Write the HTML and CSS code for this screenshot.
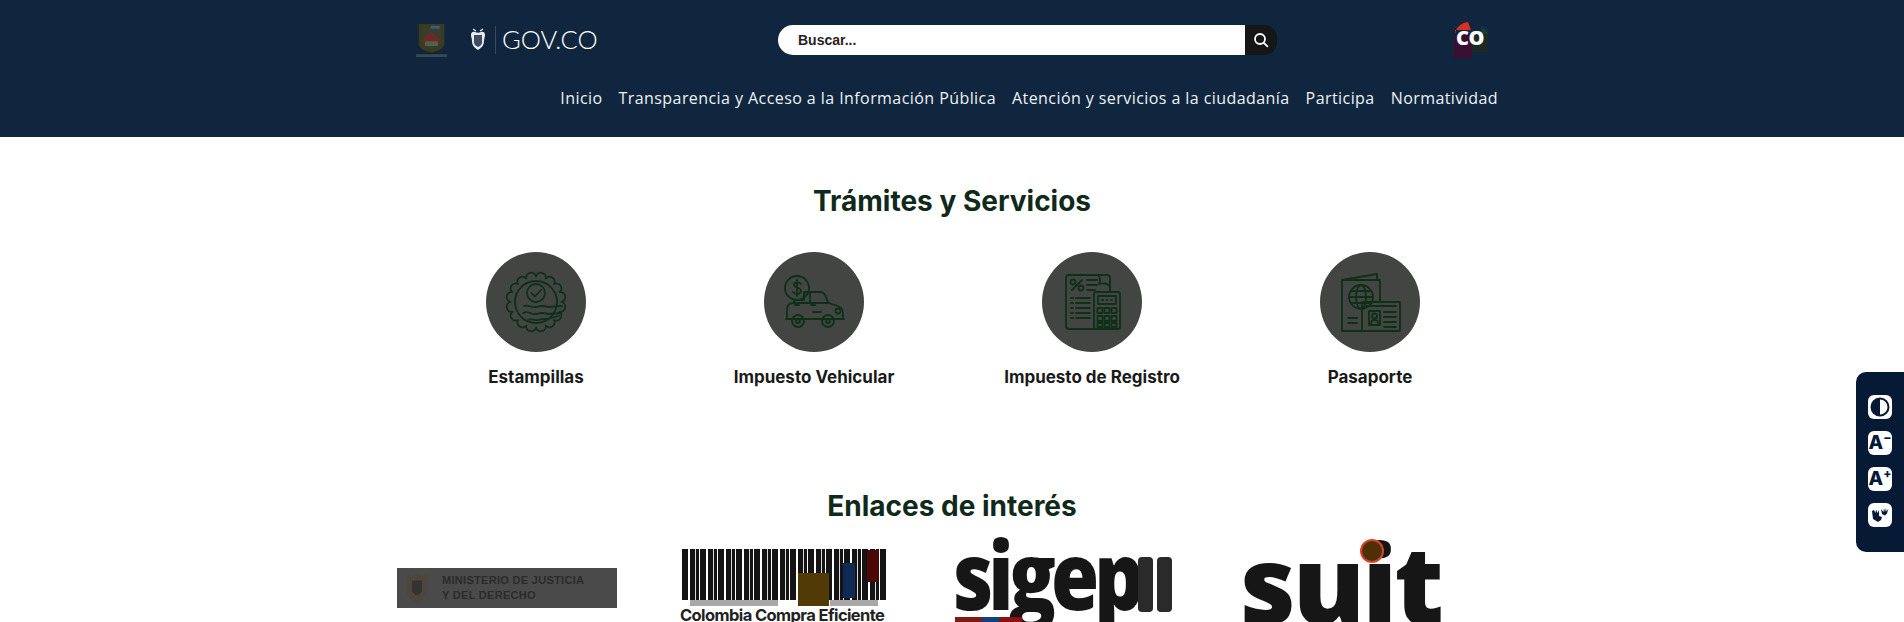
FILE: index.html
```html
<!DOCTYPE html>
<html lang="es">
<head>
<meta charset="utf-8">
<title>Trámites y Servicios</title>
<link rel="stylesheet" href="styles.css">
</head>
<body>
<header class="site-header">
  <div class="container">
    <div class="top-row">
      <div class="brand">
        <svg class="crest" viewBox="0 0 36 38" aria-hidden="true">
          <path d="M4 1h28v21c0 6-6 8-14 10C10 30 4 28 4 22z" fill="#3c3a1c"/>
          <path d="M8 5h20v16c0 4-5 5-10 7-5-2-10-3-10-7z" fill="#33402f"/>
          <path d="M9 17l8-8 6 5 5 5v3H9z" fill="#6b2a2a"/>
          <path d="M17 3h10v3H17z" fill="#3e5a8a"/>
          <path d="M11 20h14v5H11z" fill="#51624a"/>
          <path d="M1 34h34v3H1z" fill="#3a4a4c"/>
        </svg>
        <div class="gov">
          <svg class="gov-emblem" viewBox="0 0 18 26" aria-hidden="true">
            <path d="M2 8c0-3 2-4 4-3 2 1 4 1 6 0 2-1 4 0 4 3 0 2-1 4-1 6 0 5-3 7-6 9-3-2-6-4-6-9 0-2-1-4-1-6z" fill="#e8ecef"/>
            <path d="M5 8h8v7c0 3-2 4-4 5-2-1-4-2-4-5z" fill="#3d4c5e"/>
            <path d="M4 2l3 2M14 2l-3 2" stroke="#e8ecef" stroke-width="1.4"/>
          </svg>
          <span class="gov-sep"></span>
          <span class="gov-text">GOV.CO</span>
        </div>
      </div>
      <form class="search">
        <span class="search-field">Buscar...</span>
        <span class="search-btn">
          <svg viewBox="0 0 16 16" width="16" height="16" aria-hidden="true"><circle cx="7" cy="7" r="5" fill="none" stroke="#fff" stroke-width="1.8"/><path d="M10.800 10.800l3.600 3.600" stroke="#fff" stroke-width="1.800" stroke-linecap="round"/></svg>
        </span>
      </form>
      <div class="co-badge">
        <svg viewBox="0 0 37 36" aria-hidden="true">
          <path d="M2 12C3 5 8 1 15 0l3 8H2z" fill="#d8321e"/>
          <path d="M1 12h18v24H1z" fill="#3a1030"/>
          <path d="M19 8h16v22H19z" fill="#1b2a24"/>
          <path d="M28 4a8 8 0 0 1 7 8h-7z" fill="#123a44"/>
        </svg>
        <span class="co-text">CO</span>
      </div>
    </div>
    <nav class="main-nav">
      <a>Inicio</a>
      <a>Transparencia y Acceso a la Información Pública</a>
      <a>Atención y servicios a la ciudadanía</a>
      <a>Participa</a>
      <a>Normatividad</a>
    </nav>
  </div>
</header>

<main class="container">
  <section class="services">
    <h2 class="section-title">Trámites y Servicios</h2>
    <div class="service-grid">
      <article class="service">
        <span class="service-icon">
          <svg viewBox="0 0 100 100" aria-hidden="true">
            <path d="M75.500 50A5 5 0 0 1 73.600 59.800A5 5 0 0 1 68 68A5 5 0 0 1 59.800 73.600A5 5 0 0 1 50 75.500A5 5 0 0 1 40.200 73.600A5 5 0 0 1 32 68A5 5 0 0 1 26.400 59.800A5 5 0 0 1 24.500 50A5 5 0 0 1 26.400 40.200A5 5 0 0 1 32 32A5 5 0 0 1 40.200 26.400A5 5 0 0 1 50 24.500A5 5 0 0 1 59.800 26.400A5 5 0 0 1 68 32A5 5 0 0 1 73.600 40.200A5 5 0 0 1 75.500 50z"/>
            <circle cx="50" cy="50" r="21"/>
            <circle cx="50" cy="41" r="9"/>
            <path d="M45.500 41l3.500 3.500 6-6.500"/>
            <path d="M38 54c4-2 7 2 12 1s7-2 12 0l14-1M37 61c5-3 8 2 13 1s7-2 12 0l13-1M42 68c4-2 6 1 10 0s6-1 9-1l12-3"/>
          </svg>
        </span>
        <h3 class="service-name">Estampillas</h3>
      </article>
      <article class="service">
        <span class="service-icon">
          <svg viewBox="0 0 100 100" aria-hidden="true">
            <circle cx="33" cy="36" r="12"/>
            <path d="M37 32c-2-2.500-7-2-7 1s7 2 7 6-6 3.500-8 1M33 28v16"/>
            <path d="M29 51l2-3h8l2-8h16c3 0 5 3 7 11l10 3c3 1 5 3 5 7v6H71M57 67H41M27 67h-4v-9c0-4 2-7 6-7h37M46 40v11M47 53h4M31 53h4M57 60h-8"/>
            <path d="M22 67h58M40 48V40"/>
            <circle cx="34" cy="69" r="6"/>
            <circle cx="34" cy="69" r="2"/>
            <circle cx="64" cy="69" r="6"/>
            <circle cx="64" cy="69" r="2"/>
            <circle cx="74" cy="59" r="2.500"/>
          </svg>
        </span>
        <h3 class="service-name">Impuesto Vehicular</h3>
      </article>
      <article class="service">
        <span class="service-icon">
          <svg viewBox="0 0 100 100" aria-hidden="true">
            <path d="M52 77H27c-2 0-3-1-3-3V26c0-2 1-3 3-3h38c2 0 3 1 3 3v14"/>
            <path d="M56 23c3 2 2 7 1 9 3-1 9-1 11 2"/>
            <path d="M30 38l10-10"/>
            <circle cx="31" cy="30" r="2.500"/>
            <circle cx="39" cy="36" r="2.500"/>
            <path d="M45 28h10M45 33h10M45 38h8M34 46h14M34 51h14M34 56h14M34 61h14M34 66h14M29 46h2M29 51h2M29 56h2M29 61h2M29 66h2"/>
            <rect x="52" y="40" width="26" height="37" rx="2"/>
            <rect x="56" y="44" width="18" height="8"/>
            <path d="M60 48h1M64.500 48h1M69 48h1"/>
            <rect x="55.500" y="56" width="5" height="5"/><rect x="62.500" y="56" width="5" height="5"/><rect x="69.500" y="56" width="5" height="5"/>
            <rect x="55.500" y="64" width="5" height="5"/><rect x="62.500" y="64" width="5" height="5"/><rect x="69.500" y="64" width="5" height="5"/>
            <rect x="55.500" y="71" width="5" height="4"/><rect x="62.500" y="71" width="5" height="4"/><rect x="69.500" y="71" width="5" height="4"/>
          </svg>
        </span>
        <h3 class="service-name">Impuesto de Registro</h3>
      </article>
      <article class="service">
        <span class="service-icon">
          <svg viewBox="0 0 100 100" aria-hidden="true">
            <path d="M42 79H22V28l35-6v6M22 28h38v22"/>
            <circle cx="41" cy="45" r="12"/>
            <ellipse cx="41" cy="45" rx="5" ry="12"/>
            <path d="M29 45h24M31 39h20M31 51h20M28 66h9M28 71h9"/>
            <rect x="42" y="50" width="38" height="29"/>
            <rect x="49" y="59" width="11" height="14"/>
            <circle cx="54.500" cy="64" r="2.500"/>
            <path d="M51 71c0-4 7-4 7 0M46 54h30M64 60h12M64 65h12M64 70h12M64 75h12"/>
          </svg>
        </span>
        <h3 class="service-name">Pasaporte</h3>
      </article>
    </div>
  </section>

  <section class="links">
    <h2 class="section-title">Enlaces de interés</h2>
    <div class="link-grid">
      <a class="logo-min">
        <svg viewBox="0 0 24 32" aria-hidden="true"><path d="M4 5c3 2 5 1 8 0 3 1 5 2 8 0v13c0 6-4 8-8 10-4-2-8-4-8-10z" fill="#4e463a"/><path d="M8 10h8v8c0 2-2 3-4 4-2-1-4-2-4-4z" fill="#333"/></svg>
        <span class="logo-min-text">MINISTERIO DE JUSTICIA<br>Y DEL DERECHO</span>
      </a>
      <a class="logo-compra">
        <span class="bars"></span>
        <span class="bar-under under-left"></span>
        <span class="bar-under under-right"></span>
        <span class="bar-block block-gold"></span>
        <span class="bar-block block-blue"></span>
        <span class="bar-block block-red"></span>
        <span class="compra-text">Colombia Compra Eficiente</span>
      </a>
      <a class="logo-sigep">
        <span class="sigep-text">sigep</span><span class="sigep-bars"><i></i><i></i></span>
        <span class="sigep-strip"></span>
      </a>
      <a class="logo-suit">
        <span class="suit-dot"></span>
        <span class="suit-text">suit</span>
      </a>
    </div>
  </section>
</main>

<aside class="a11y-bar">
  <button class="a11y-btn" aria-label="Contraste">
    <svg viewBox="0 0 24 24" aria-hidden="true"><circle cx="12" cy="12" r="8.500" fill="none" stroke="#071a35" stroke-width="2"/><path d="M12 3.500a8.500 8.500 0 0 0 0 17z" fill="#071a35"/></svg>
  </button>
  <button class="a11y-btn a11y-text">A<sup>−</sup></button>
  <button class="a11y-btn a11y-text">A<sup>+</sup></button>
  <button class="a11y-btn" aria-label="Lengua de señas">
    <svg viewBox="0 0 24 24" aria-hidden="true"><path d="M4 8l1 8 5 3 3-2 1-3-3-1V7l-1.500 3L8 6.500 7.500 10 6 7zM13 6l1 5 3 1.500 2-2 1.500-5-2 3L18 5l-1 4-1-4-.5 4z" fill="#071a35"/></svg>
  </button>
</aside>
</body>
</html>
```
FILE: styles.css
```css
* { box-sizing: border-box; }
html, body { margin: 0; height: 622px; overflow: hidden; background: #fff; }
body { font-family: "Inter", "Liberation Sans", sans-serif; color: #1a1a1a; }

.container { width: 1110px; margin: 0 auto; }

.site-header { background: #10263f; height: 137px; }
.top-row { display: flex; align-items: flex-start; padding-top: 22px; height: 88px; }
.brand { display: flex; align-items: flex-start; width: 381px; padding-left: 18px; }
.crest { width: 33px; height: 37px; display: block; }
.gov { display: flex; align-items: center; margin-left: 21px; height: 36px; }
.gov-emblem { width: 18px; height: 26px; display: block; }
.gov-sep { width: 1px; height: 28px; background: #3c4a58; margin: 0 6px 0 8px; }
.gov-text { color: #fff; font-family: "Lato", sans-serif; font-weight: 300; font-size: 25.500px; line-height: 1; }

.search { display: flex; width: 499px; height: 30px; margin-top: 3px; }
.search-field { flex: 1; background: #fff; border-radius: 15px 0 0 15px; padding-left: 20px; font-family: "Liberation Sans", sans-serif; font-weight: 700; font-size: 14px; line-height: 30px; color: #2a2020; }
.search-btn { width: 32px; background: #161616; border-radius: 0 13px 13px 0; display: flex; align-items: center; justify-content: center; }

.co-badge { position: relative; width: 37px; height: 36px; margin-left: 176px; }
.co-badge svg { display: block; width: 37px; height: 36px; }
.co-text { position: absolute; left: 3px; top: 6px; color: #fff; font-family: "Open Sans", sans-serif; font-weight: 800; font-size: 20px; line-height: 1; letter-spacing: -.5px; }

.main-nav { display: flex; justify-content: flex-end; gap: 16px; padding-right: 9px; }
.main-nav a { color: #eef1f4; font-family: "Open Sans", sans-serif; font-weight: 400; font-size: 16px; line-height: 20px; letter-spacing: .43px; white-space: nowrap; }

.section-title { margin: 0; text-align: center; font-weight: 700; font-size: 28px; line-height: 34px; color: #0f2a1a; }
.services { padding-top: 47px; }
.service-grid { display: grid; grid-template-columns: repeat(4, 278px); margin-top: 34px; }
.service { display: flex; flex-direction: column; align-items: center; }
.service-icon { width: 100px; height: 100px; border-radius: 50%; background: #424542; display: block; }
.service-icon svg { display: block; width: 100px; height: 100px; fill: none; stroke: #0e3019; stroke-width: 1.800; stroke-linecap: round; stroke-linejoin: round; }
.service-name { margin: 15px 0 0; font-weight: 700; font-size: 17px; line-height: 20px; color: #1a1a1a; }

.links { padding-top: 102px; }
.link-grid { display: grid; grid-template-columns: 283px 275px 285px 1fr; margin-top: 18px; height: 81px; }
.link-grid a { display: block; position: relative; }

.logo-min { display: flex !important; align-items: center; width: 220px; height: 40px; margin-top: 27px; background: #4a4a4a; padding-left: 4px; }
.logo-min svg { width: 32px; height: 40px; flex: none; }
.logo-min-text { margin-left: 9px; font-family: "Liberation Sans", sans-serif; font-weight: 700; font-size: 11px; line-height: 15px; letter-spacing: .3px; color: #2b2b2b; }

.logo-compra { width: 207px; height: 81px; }
.bars { position: absolute; left: 2px; top: 8px; width: 205px; height: 51px; background: repeating-linear-gradient(90deg, #141414 0 6px, #fff 6px 8px, #141414 8px 13px, #d8d8d8 13px 14px, #141414 14px 17px, #fff 17px 18px); }
.bar-under { position: absolute; top: 59px; height: 6px; background: #a8a8a8; }
.under-left { left: 10px; width: 88px; }
.under-right { left: 150px; width: 48px; }
.bar-block { position: absolute; }
.block-gold { left: 118px; top: 32px; width: 31px; height: 33px; background: #523a06; }
.block-blue { left: 163px; top: 22px; width: 12px; height: 35px; background: #0e2a55; }
.block-red { left: 187px; top: 9px; width: 12px; height: 32px; background: #4c0707; }
.compra-text { position: absolute; left: 0; top: 64px; font-weight: 700; font-size: 16.500px; line-height: 20px; white-space: nowrap; color: #222; letter-spacing: -.6px; }

.logo-sigep { height: 81px; width: 220px; }
.sigep-text { position: absolute; left: -2px; top: -11px; font-family: "Open Sans", sans-serif; font-weight: 800; font-size: 78px; line-height: 100px; letter-spacing: -5px; color: #161616; transform: scaleY(1.2); transform-origin: 0 81px; }
.sigep-bars { position: absolute; left: 183px; top: 16px; display: flex; gap: 4px; }
.sigep-bars i { display: block; width: 15px; height: 55px; border-radius: 4px; background: #2a2a2a; }
.sigep-strip { position: absolute; left: 0; top: 76px; width: 67px; height: 5px; background: linear-gradient(90deg, #7c1a14 0 40%, #123f86 40% 65%, #8c1010 65%); }

.logo-suit { height: 81px; }
.suit-text { position: absolute; left: 0; top: -18px; font-family: "Open Sans", sans-serif; font-weight: 800; font-size: 108px; line-height: 120px; letter-spacing: -3px; color: #161616; }
.suit-dot { position: absolute; left: 122px; top: 0; width: 20px; height: 20px; border-radius: 50%; background: #4f2f05; box-shadow: 0 0 0 2px #d9432c; z-index: 1; }

.a11y-bar { position: fixed; right: 0; top: 372px; width: 48px; height: 180px; background: #071a35; border-radius: 10px 0 0 10px; display: flex; flex-direction: column; align-items: center; gap: 12px; padding-top: 23px; }
.a11y-btn { width: 24px; height: 24px; padding: 0; border: 0; border-radius: 6px; background: #fff; color: #071a35; font-family: "Inter", sans-serif; font-weight: 800; font-size: 19px; line-height: 24px; display: flex; align-items: center; justify-content: center; }
.a11y-btn svg { width: 24px; height: 24px; display: block; }
.a11y-btn sup { font-size: 12px; font-weight: 800; line-height: 1; align-self: flex-start; margin-top: 1px; }
```
